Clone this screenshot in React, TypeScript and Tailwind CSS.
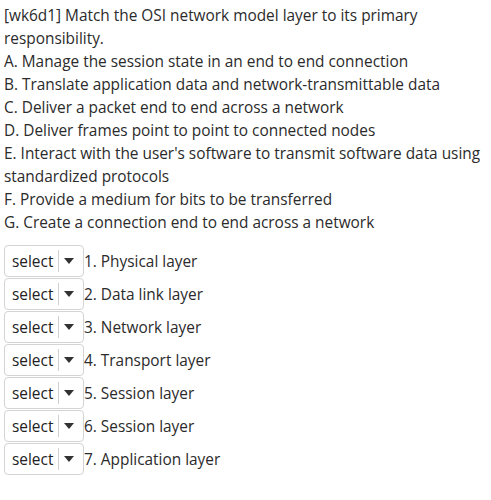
const options = [
  'A. Manage the session state in an end to end connection',
  'B. Translate application data and network-transmittable data',
  'C. Deliver a packet end to end across a network',
  'D. Deliver frames point to point to connected nodes',
  "E. Interact with the user's software to transmit software data using standardized protocols",
  'F. Provide a medium for bits to be transferred',
  'G. Create a connection end to end across a network',
];

const layers = [
  '1. Physical layer',
  '2. Data link layer',
  '3. Network layer',
  '4. Transport layer',
  '5. Session layer',
  '6. Session layer',
  '7. Application layer',
];

function SelectBox() {
  return (
    <div className="flex items-center h-[32px] w-[80px] border border-[#d4d4d4] rounded-[4px] bg-white shrink-0">
      <span className="pl-[7px] w-[53px] text-[#222]">select</span>
      <span className="w-px h-[22px] bg-[#cfcfcf]" />
      <svg width="10" height="6" viewBox="0 0 10 6" className="ml-[5px]">
        <polygon points="0,0 10,0 5,6" fill="#333" />
      </svg>
    </div>
  );
}

export default function App() {
  return (
    <div
      className="bg-white text-[15.4px] leading-[23px] text-[#2b2b2b] pl-[4px] pt-[4px] pr-[6px]"
      style={{ fontFamily: '"Open Sans", sans-serif' }}
    >
      <p>[wk6d1] Match the OSI network model layer to its primary responsibility.</p>
      {options.map((o) => (
        <p key={o}>{o}</p>
      ))}
      <div className="mt-[11px] flex flex-col gap-[1px]">
        {layers.map((l) => (
          <div key={l} className="flex items-center">
            <SelectBox />
            <span>{l}</span>
          </div>
        ))}
      </div>
    </div>
  );
}
